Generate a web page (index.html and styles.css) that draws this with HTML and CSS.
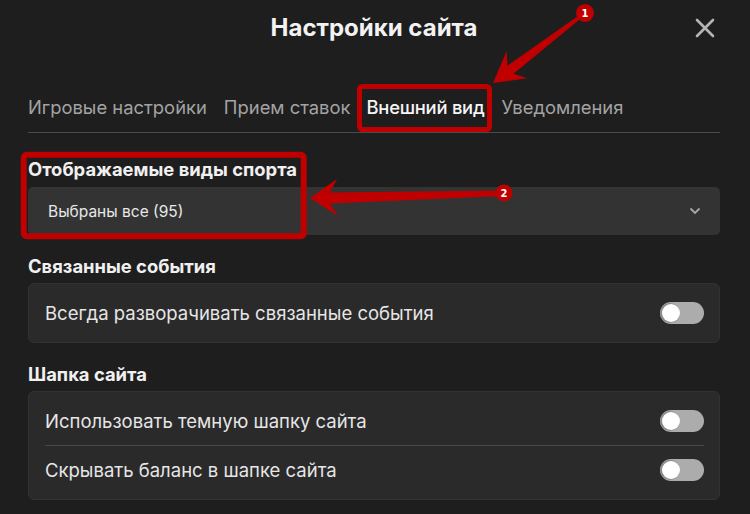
FILE: index.html
```html
<!DOCTYPE html>
<html lang="ru">

<head>
    <meta charset="UTF-8">
    <meta name="viewport" content="width=device-width, initial-scale=1.0">
    <link rel="stylesheet" href="styles.css">
</head>

<body>
    <div class="modal">
        <div class="modal-head">
            <h1 class="title">Настройки сайта</h1>
            <button class="close" aria-label="Закрыть">
                <svg width="20" height="20" viewBox="0 0 20 20">
                    <path d="M2 2 L18 18 M18 2 L2 18" stroke="#b4b4b4" stroke-width="2.6" stroke-linecap="round" />
                </svg>
            </button>
        </div>

        <div class="tabs">
            <span class="tab">Игровые настройки</span>
            <span class="tab">Прием ставок</span>
            <span class="tab active">Внешний вид</span>
            <span class="tab">Уведомления</span>
        </div>

        <div class="section first">
            <h2 class="section-title">Отображаемые виды спорта</h2>
            <div class="select">
                <span>Выбраны все (95)</span>
                <svg width="12" height="8" viewBox="0 0 12 8">
                    <path d="M1.5 1.5 L6 6 L10.5 1.5" fill="none" stroke="#a8a8a8" stroke-width="1.8" />
                </svg>
            </div>
        </div>

        <div class="section">
            <h2 class="section-title">Связанные события</h2>
            <div class="card">
                <div class="row">
                    <span>Всегда разворачивать связанные события</span>
                    <span class="switch"></span>
                </div>
            </div>
        </div>

        <div class="section">
            <h2 class="section-title">Шапка сайта</h2>
            <div class="card">
                <div class="row">
                    <span>Использовать темную шапку сайта</span>
                    <span class="switch"></span>
                </div>
                <div class="row">
                    <span>Скрывать баланс в шапке сайта</span>
                    <span class="switch"></span>
                </div>
            </div>
        </div>
    </div>

    <!-- пометки поверх страницы: рамки, стрелки, номера -->
    <svg class="marks" width="750" height="514" viewBox="0 0 750 514">
        <g fill="none" stroke="#c00000">
            <rect x="359.5" y="86.5" width="130" height="43" rx="3" stroke-width="5" />
            <rect x="23.7" y="154.7" width="280" height="81.6" rx="3" stroke-width="6" />
        </g>
        <g fill="#c00000">
            <polygon points="493,83 527.2,78.3 513.5,73.7 585.9,14.2 584.1,11.8 507.5,65.7 506.6,51.3" />
            <polygon points="310,198 338,216 330,203.5 504,196 504,190.5 330,192.5 337,179" />
            <circle cx="585" cy="13" r="9" />
            <circle cx="504" cy="193" r="8.5" />
        </g>
        <g fill="#fff" font-family="'DejaVu Sans', sans-serif" font-size="10" font-weight="700" text-anchor="middle">
            <text x="585" y="16.6">1</text>
            <text x="504" y="196.6">2</text>
        </g>
    </svg>
</body>

</html>
```

FILE: styles.css
```css
body {
    margin: 0;
    background-color: #1e1e1e;
    font-family: Inter, "Noto Sans", sans-serif;
    color: #ececec;
}

.modal {
    width: 750px;
    height: 514px;
    box-sizing: border-box;
    padding: 0 30px 0 28px;
}

.modal-head {
    height: 56px;
    display: grid;
    grid-template-columns: 1fr auto 1fr;
    align-items: center;
}

.title {
    grid-column: 2;
    margin: 0;
    font-size: 24px;
    line-height: 30px;
    font-weight: 700;
    color: #f2f2f2;
}

.close {
    grid-column: 3;
    justify-self: end;
    width: 24px;
    height: 24px;
    margin-right: 3px;
    padding: 0;
    border: 0;
    background: none;
    display: flex;
    align-items: center;
    justify-content: center;
}

.tabs {
    display: flex;
    gap: 17px;
    padding-top: 39px;
    border-bottom: 1px solid #4a4a4a;
}

.tab {
    font-size: 18.4px;
    line-height: 24px;
    padding-bottom: 13px;
    color: #a3a3a3;
    white-space: nowrap;
}

.tab.active {
    margin-left: -1px;
    color: #f5f5f5;
    font-weight: 500;
    letter-spacing: -0.25px;
}

.section {
    margin-top: 20px;
}

.section.first {
    margin-top: 25px;
}

.section-title {
    margin: 0 0 6px;
    font-size: 18.4px;
    line-height: 22px;
    font-weight: 700;
    color: #f0f0f0;
}

.first .section-title {
    margin-bottom: 7px;
}

.select {
    height: 48px;
    box-sizing: border-box;
    padding: 0 19px 0 20px;
    display: flex;
    align-items: center;
    justify-content: space-between;
    background-color: #333333;
    border-radius: 5px;
    font-size: 15.5px;
    color: #e8e8e8;
}

.card {
    padding: 5px 15px 5px 16px;
    background-color: #2a2a2a;
    border: 1px solid #323232;
    border-radius: 6px;
}

.row {
    padding: 13px 0;
    display: flex;
    align-items: center;
    justify-content: space-between;
    font-size: 18.5px;
    line-height: 22px;
    color: #e6e6e6;
}

.row + .row {
    border-top: 1px solid #474747;
}

.switch {
    position: relative;
    width: 44px;
    height: 22px;
    border-radius: 11px;
    background-color: #acacac;
}

.switch::after {
    content: "";
    position: absolute;
    top: 2px;
    left: 2px;
    width: 18px;
    height: 18px;
    border-radius: 50%;
    background-color: #fff;
    box-shadow: -1px 0 0 1px #8a8a8a;
}

.marks {
    position: absolute;
    top: 0;
    left: 0;
    pointer-events: none;
}
```
